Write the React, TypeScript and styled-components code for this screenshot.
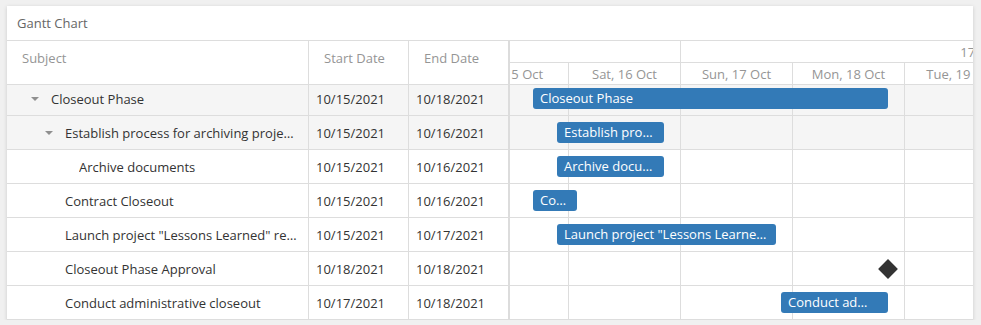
import React from "react";
import styled, { createGlobalStyle } from "styled-components";

const DAY_WIDTH = 112;
const SCROLL_X = 614;
const SCROLL_Y = 3;

const GlobalStyle = createGlobalStyle`
  html, body { margin: 0; padding: 0; background: #f0f0f0; }
  body {
    font-family: "Open Sans", "Liberation Sans", sans-serif;
    font-size: 13px;
    color: #333;
  }
  * { box-sizing: border-box; }
`;

const Page = styled.div`
  padding: 6px 8px 0 7px;
`;

const Card = styled.div`
  width: 966px;
  height: 314px;
  background: #fff;
  box-shadow: 0 1px 4px rgba(0, 0, 0, 0.16);
  display: flex;
  flex-direction: column;
  overflow: hidden;
`;

const TitleBar = styled.div`
  flex: none;
  height: 35px;
  border-bottom: 1px solid #ddd;
  padding-left: 10px;
  display: flex;
  align-items: center;
  color: #666;
`;

const Main = styled.div`
  flex: 1;
  min-height: 0;
  display: flex;
`;

const GridPane = styled.div`
  flex: none;
  width: 501px;
  display: flex;
  flex-direction: column;
`;

const GridHeader = styled.div`
  flex: none;
  height: 44px;
  display: flex;
  border-bottom: 1px solid #ddd;
`;

const HeaderCell = styled.div<{ $w: number; $last?: boolean }>`
  width: ${(p) => p.$w}px;
  flex: none;
  padding: 8px 0 0 15px;
  line-height: 18px;
  color: #959595;
  border-right: ${(p) => (p.$last ? "none" : "1px solid #ddd")};
`;

const BodyViewport = styled.div`
  flex: 1;
  min-height: 0;
  overflow: hidden;
`;

const GridBodyInner = styled.div`
  margin-top: -${SCROLL_Y}px;
`;

const GridRow = styled.div<{ $shaded?: boolean }>`
  height: 34px;
  display: flex;
  border-bottom: 1px solid #ddd;
  background: ${(p) => (p.$shaded ? "#f5f5f5" : "#fff")};
`;

const SubjectCell = styled.div<{ $level: number }>`
  width: 302px;
  flex: none;
  display: flex;
  align-items: center;
  padding-left: ${(p) => 24 + p.$level * 14}px;
  padding-right: 9px;
  border-right: 1px solid #ddd;
  min-width: 0;
`;

const Toggle = styled.span<{ $visible: boolean }>`
  flex: none;
  width: 20px;
  height: 4px;
  display: flex;
  &::before {
    content: "";
    display: ${(p) => (p.$visible ? "block" : "none")};
    width: 0;
    height: 0;
    border-left: 4px solid transparent;
    border-right: 4px solid transparent;
    border-top: 4px solid #8f8f8f;
  }
`;

const CellText = styled.span`
  flex: 1;
  min-width: 0;
  white-space: nowrap;
  overflow: hidden;
  text-overflow: ellipsis;
`;

const DateCell = styled.div<{ $w: number; $last?: boolean }>`
  width: ${(p) => p.$w}px;
  flex: none;
  display: flex;
  align-items: center;
  padding-left: 7px;
  border-right: ${(p) => (p.$last ? "none" : "1px solid #ddd")};
`;

const Splitter = styled.div`
  flex: none;
  width: 2px;
  background: #dcdcdc;
`;

const TimelinePane = styled.div`
  flex: 1;
  min-width: 0;
  display: flex;
  flex-direction: column;
  overflow: hidden;
`;

const TimelineHeader = styled.div`
  flex: none;
  height: 44px;
  overflow: hidden;
`;

const Strip = styled.div<{ $days: number; $shiftY?: number }>`
  width: ${(p) => p.$days * DAY_WIDTH}px;
  margin-left: -${SCROLL_X}px;
  margin-top: ${(p) => -(p.$shiftY ?? 0)}px;
`;

const ScaleRow = styled.div`
  height: 22px;
  display: flex;
  border-bottom: 1px solid #ddd;
`;

const ScaleCell = styled.div<{ $days: number; $shift?: number }>`
  flex: none;
  width: ${(p) => p.$days * DAY_WIDTH}px;
  border-left: 1px solid #ddd;
  padding-right: ${(p) => p.$shift ?? 0}px;
  display: flex;
  align-items: center;
  justify-content: center;
  white-space: nowrap;
  color: #959595;
`;

const TimelineRow = styled.div<{ $shaded?: boolean }>`
  position: relative;
  height: 34px;
  display: flex;
  border-bottom: 1px solid #ddd;
  background: ${(p) => (p.$shaded ? "#f5f5f5" : "#fff")};
`;

const DayColumn = styled.div`
  flex: none;
  width: ${DAY_WIDTH}px;
  border-left: 1px solid #ddd;
`;

const Bar = styled.div`
  position: absolute;
  top: 6px;
  height: 21px;
  padding: 0 9px 0 7px;
  border-radius: 3px;
  background: #337ab7;
  color: #fff;
  line-height: 21px;
  white-space: nowrap;
  overflow: hidden;
  text-overflow: ellipsis;
`;

const Milestone = styled.div`
  position: absolute;
  top: 10px;
  width: 14px;
  height: 14px;
  background: #333;
  transform: rotate(45deg);
`;

type Task = {
  title: string;
  start: string;
  end: string;
  level: number;
  expandable?: boolean;
  shaded?: boolean;
  bar?: { left: number; width: number };
  milestone?: number;
};

const tasks: Task[] = [
  { title: "Closeout Phase", start: "10/15/2021", end: "10/18/2021", level: 0, expandable: true, shaded: true, bar: { left: 637, width: 355 } },
  { title: "Establish process for archiving project files", start: "10/15/2021", end: "10/16/2021", level: 1, expandable: true, shaded: true, bar: { left: 661, width: 107 } },
  { title: "Archive documents", start: "10/15/2021", end: "10/16/2021", level: 2, bar: { left: 661, width: 107 } },
  { title: "Contract Closeout", start: "10/15/2021", end: "10/16/2021", level: 1, bar: { left: 637, width: 44 } },
  { title: 'Launch project "Lessons Learned" review', start: "10/15/2021", end: "10/17/2021", level: 1, bar: { left: 661, width: 219 } },
  { title: "Closeout Phase Approval", start: "10/18/2021", end: "10/18/2021", level: 1, milestone: 992 },
  { title: "Conduct administrative closeout", start: "10/17/2021", end: "10/18/2021", level: 1, bar: { left: 885, width: 107 } },
];

const weeks = ["10 October 2021 - 16 October 2021", "17 October 2021 - 23 October 2021"];
const dayNames = ["Sun", "Mon", "Tue", "Wed", "Thu", "Fri", "Sat"];
const days = Array.from({ length: 14 }, (_, i) => `${dayNames[i % 7]}, ${10 + i} Oct`);

export default function App() {
  return (
    <>
      <GlobalStyle />
      <Page>
        <Card>
          <TitleBar>Gantt Chart</TitleBar>
          <Main>
            <GridPane>
              <GridHeader>
                <HeaderCell $w={302}>Subject</HeaderCell>
                <HeaderCell $w={100}>Start Date</HeaderCell>
                <HeaderCell $w={99} $last>End Date</HeaderCell>
              </GridHeader>
              <BodyViewport>
                <GridBodyInner>
                  {tasks.map((t) => (
                    <GridRow key={t.title} $shaded={t.shaded}>
                      <SubjectCell $level={t.level}>
                        <Toggle $visible={!!t.expandable} />
                        <CellText>{t.title}</CellText>
                      </SubjectCell>
                      <DateCell $w={100}>{t.start}</DateCell>
                      <DateCell $w={99} $last>{t.end}</DateCell>
                    </GridRow>
                  ))}
                </GridBodyInner>
              </BodyViewport>
            </GridPane>
            <Splitter />
            <TimelinePane>
              <TimelineHeader>
                <Strip $days={14}>
                  <ScaleRow>
                    {weeks.map((w) => (
                      <ScaleCell key={w} $days={7} $shift={12}>{w}</ScaleCell>
                    ))}
                  </ScaleRow>
                  <ScaleRow>
                    {days.map((d) => (
                      <ScaleCell key={d} $days={1}>{d}</ScaleCell>
                    ))}
                  </ScaleRow>
                </Strip>
              </TimelineHeader>
              <BodyViewport>
                <Strip $days={14} $shiftY={SCROLL_Y}>
                  {tasks.map((t) => (
                    <TimelineRow key={t.title} $shaded={t.shaded}>
                      {days.map((d) => (
                        <DayColumn key={d} />
                      ))}
                      {t.bar && (
                        <Bar style={{ left: t.bar.left, width: t.bar.width }}>{t.title}</Bar>
                      )}
                      {t.milestone !== undefined && <Milestone style={{ left: t.milestone - 7 }} />}
                    </TimelineRow>
                  ))}
                </Strip>
              </BodyViewport>
            </TimelinePane>
          </Main>
        </Card>
      </Page>
    </>
  );
}
